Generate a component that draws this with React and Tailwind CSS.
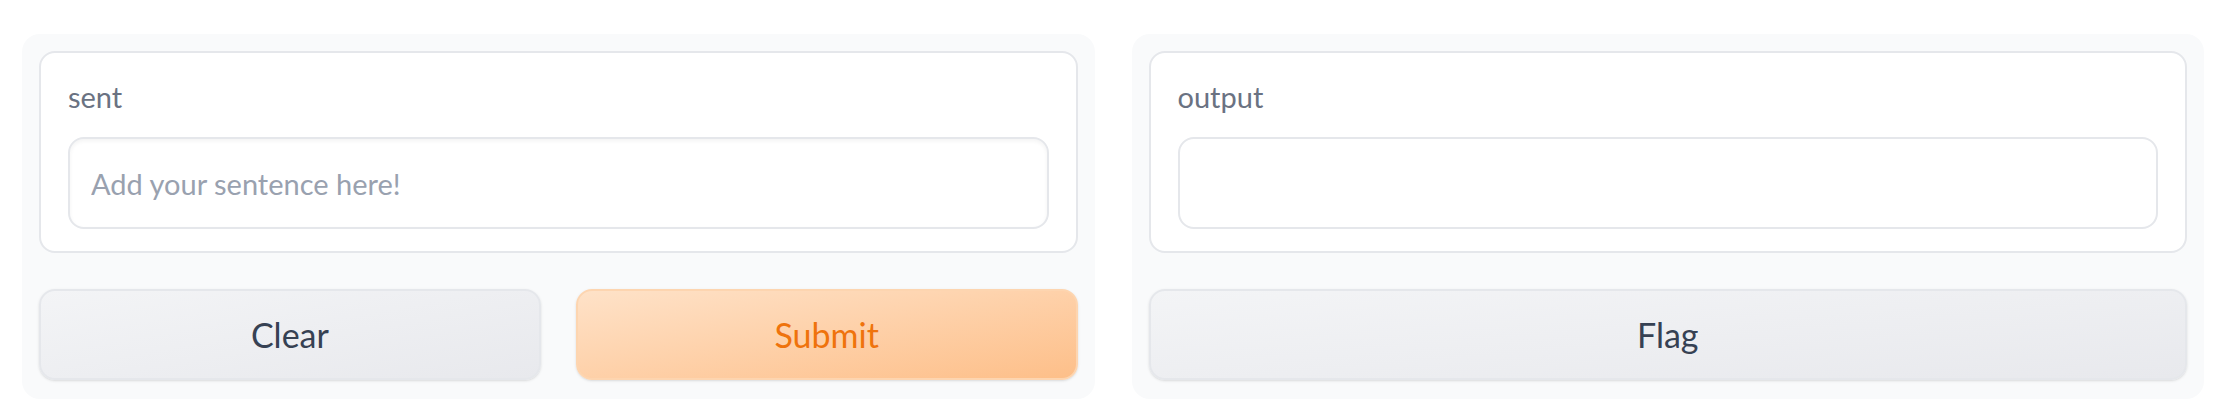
export default function App() {
  return (
    <div className="w-full min-h-[418px] bg-white pt-[34px] pl-[22px] pr-[36px] font-['Lato',sans-serif]">
      <div className="flex gap-[37px]">
        {/* Left panel */}
        <div className="flex-1 bg-gray-50 rounded-[18px] p-[17px] pb-[19px] flex flex-col gap-[36px]">
          <div className="bg-white border-2 border-gray-200 rounded-[16px] px-[27px] pt-[26px] pb-[22px] flex flex-col gap-[22px]">
            <span className="text-[29px] leading-[36px] text-gray-500">sent</span>
            <input
              type="text"
              placeholder="Add your sentence here!"
              className="h-[92px] w-full border-2 border-gray-200 rounded-[16px] bg-white shadow-[inset_0_2px_4px_rgba(0,0,0,0.05)] px-[21px] text-[29px] text-gray-700 placeholder:text-gray-400 outline-none"
            />
          </div>
          <div className="flex gap-[35px]">
            <button className="flex-1 h-[91px] rounded-[16px] border-2 border-gray-200 bg-linear-to-br from-[#f3f4f6] to-[#e8e9ed] text-gray-700 text-[34px] shadow-sm">
              Clear
            </button>
            <button className="flex-1 h-[91px] rounded-[16px] border-2 border-[#fdd5b0] bg-linear-to-br from-[#fee2c8] to-[#fdbf89] text-[#ef730c] text-[34px] shadow-sm">
              Submit
            </button>
          </div>
        </div>
        {/* Right panel */}
        <div className="flex-1 bg-gray-50 rounded-[18px] p-[17px] pb-[19px] flex flex-col gap-[36px]">
          <div className="bg-white border-2 border-gray-200 rounded-[16px] px-[27px] pt-[26px] pb-[22px] flex flex-col gap-[22px]">
            <span className="text-[29px] leading-[36px] text-gray-500">output</span>
            <div className="h-[92px] w-full border-2 border-gray-200 rounded-[16px] bg-white" />
          </div>
          <div className="flex">
            <button className="flex-1 h-[91px] rounded-[16px] border-2 border-gray-200 bg-linear-to-br from-[#f3f4f6] to-[#e8e9ed] text-gray-700 text-[34px] shadow-sm">
              Flag
            </button>
          </div>
        </div>
      </div>
    </div>
  );
}
